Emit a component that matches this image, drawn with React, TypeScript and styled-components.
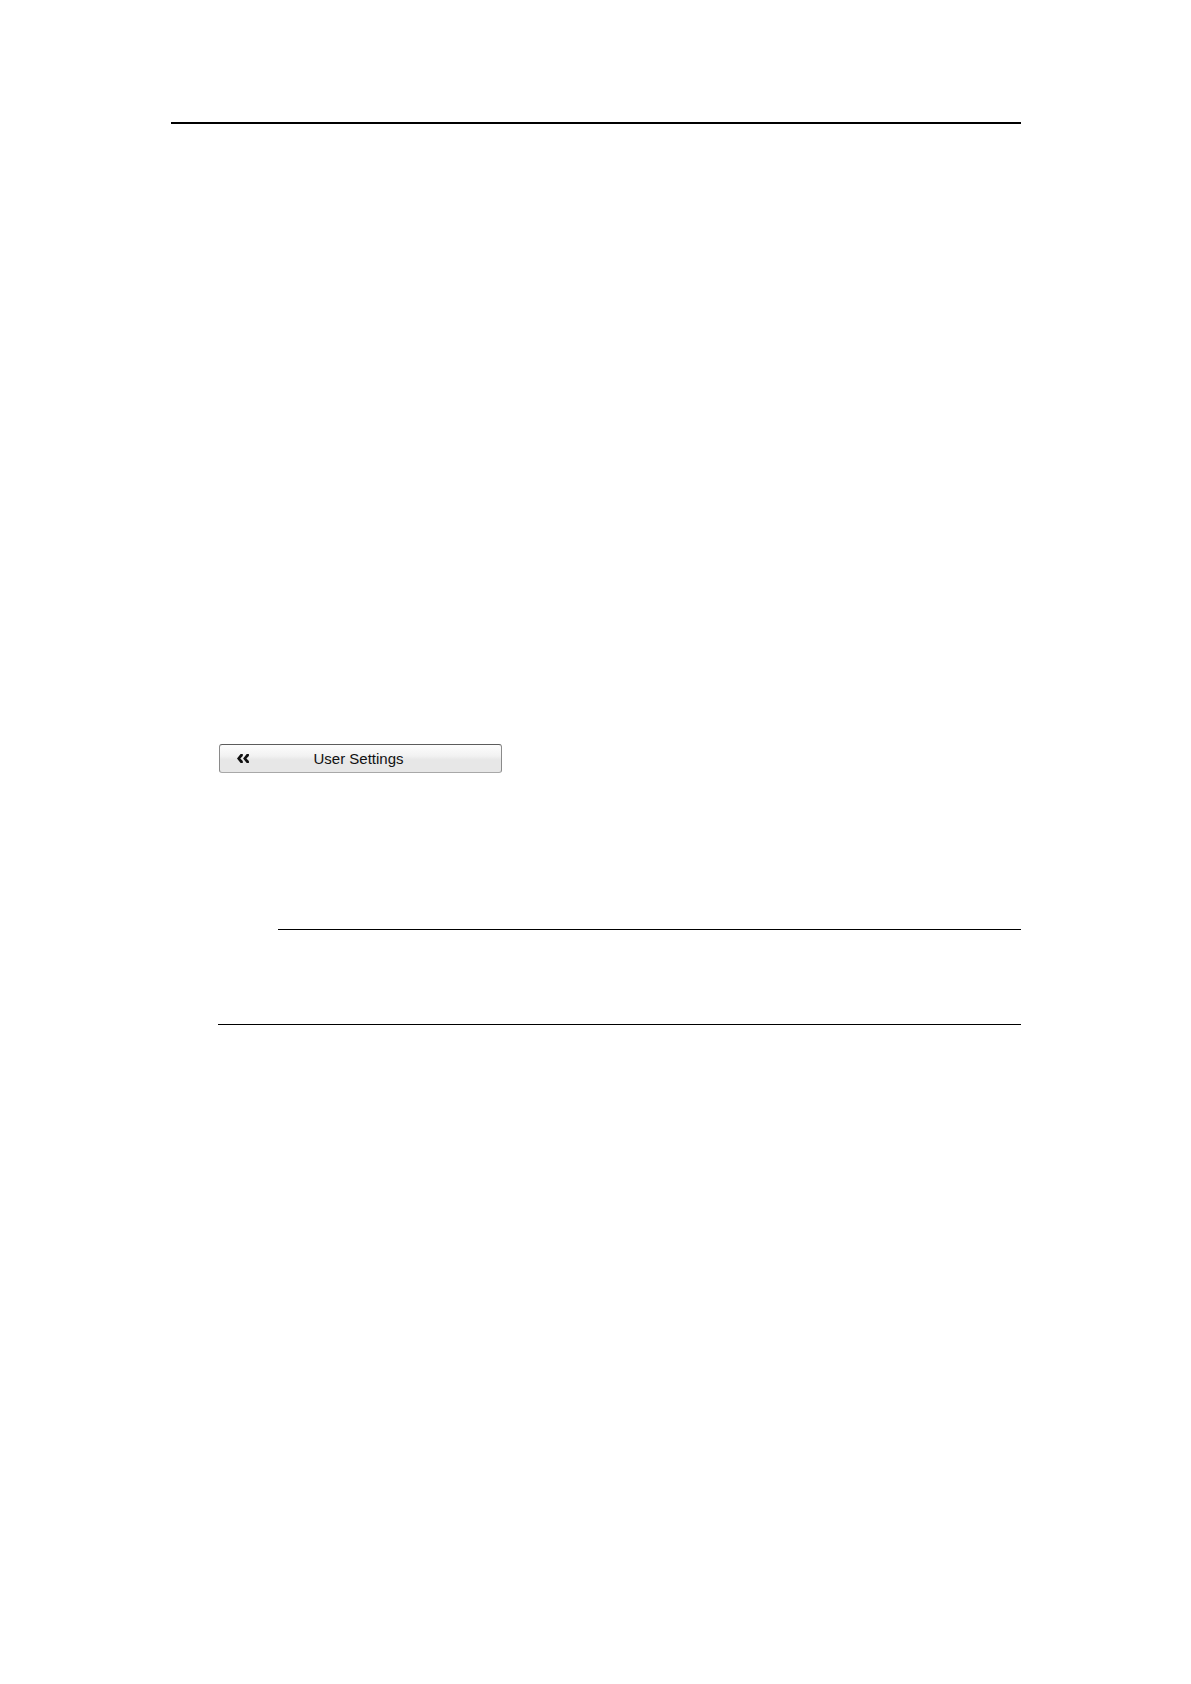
import React from "react";
import styled, { createGlobalStyle } from "styled-components";

const GlobalStyle = createGlobalStyle`
  body {
    margin: 0;
    background: #fff;
    font-family: "Liberation Sans", Arial, sans-serif;
  }
`;

const Page = styled.main`
  padding: 122px 170px 80px 171px;
`;

const Rule = styled.hr<{ $weight?: number; $indent?: number }>`
  height: ${({ $weight = 1 }) => $weight}px;
  margin: 0 0 0 ${({ $indent = 0 }) => $indent}px;
  border: 0;
  background: #000;
`;

const Body = styled.section`
  padding: 620px 0 0 47px;
`;

const Note = styled.div`
  display: flex;
  flex-direction: column;
  gap: 94px;
  margin-top: 156px;
`;

const MenuButton = styled.button`
  display: grid;
  grid-template-columns: 12px 1fr 16px;
  align-items: center;
  width: 283px;
  height: 29px;
  margin: 0 0 0 1px;
  padding: 0 17px;
  border: 1px solid #8a8a8a;
  border-top-color: #5c5c5c;
  border-bottom-color: #a8a8a8;
  border-radius: 3px;
  background: linear-gradient(#fdfdfd 0%, #f2f2f2 40%, #e7e7e7 55%, #e7e7e7 100%);
  color: #111;
  font-family: inherit;
  font-size: 15px;
  line-height: 20px;
  cursor: pointer;
`;

const Chevrons = () => (
  <svg width="12" height="9" viewBox="0 0 12 9" fill="#111" aria-hidden="true">
    <path d="M3.6 0H5.8V2L3.3 4.5L5.8 7V9H3.6L0 4.5Z" />
    <path d="M9.7 0H11.9V2L9.4 4.5L11.9 7V9H9.7L6.1 4.5Z" />
  </svg>
);

export default function App() {
  return (
    <>
      <GlobalStyle />
      <Page>
        <Rule $weight={2} />
        <Body>
          <MenuButton type="button">
            <Chevrons />
            <span>User Settings</span>
          </MenuButton>
          <Note>
            <Rule $indent={60} />
            <Rule />
          </Note>
        </Body>
      </Page>
    </>
  );
}
